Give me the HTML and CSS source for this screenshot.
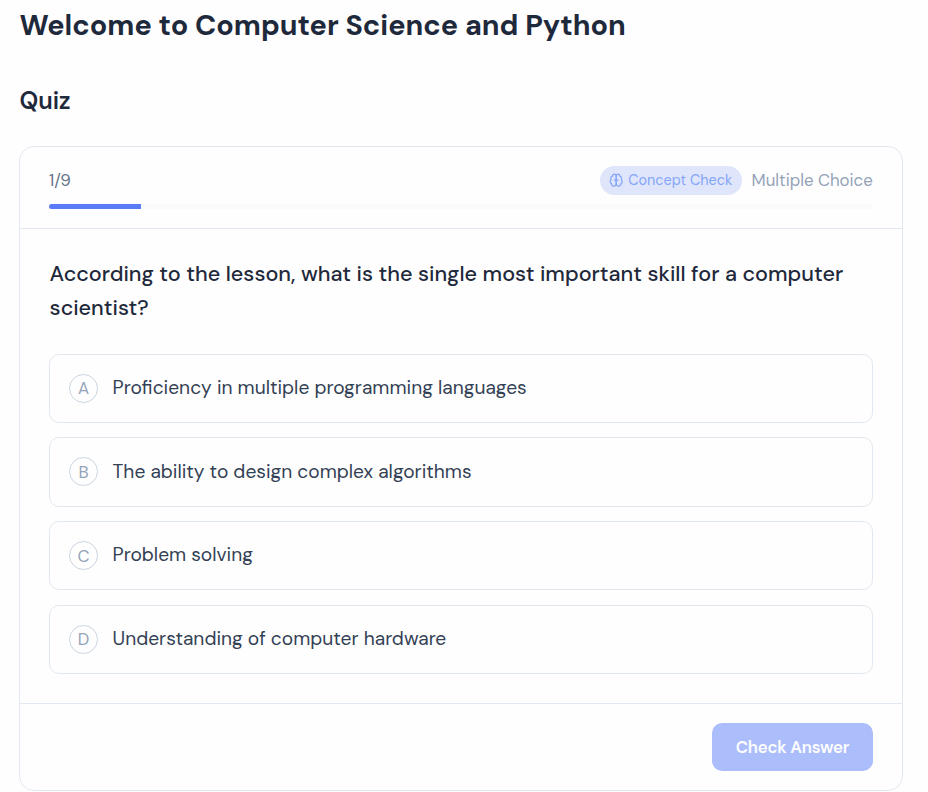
FILE: index.html
```html
<!DOCTYPE html>
<html lang="en">
<head>
    <meta charset="UTF-8">
    <meta name="viewport" content="width=device-width, initial-scale=1.0">
    <title>Welcome to Computer Science and Python</title>
    <link rel="stylesheet" href="styles.css">
</head>
<body>
    <div class="container">
        <h1>Welcome to Computer Science and Python</h1>
        <h2>Quiz</h2>

        <form class="quiz" id="quizForm">
            <div class="quiz-header">
                <div class="quiz-info">
                    <span class="counter">1/9</span>
                    <div class="tags">
                        <span class="badge">
                            <svg class="badge-icon" viewBox="0 0 24 24" fill="none" stroke="currentColor" stroke-width="2" stroke-linecap="round" stroke-linejoin="round">
                                <path d="M12 5a3 3 0 1 0-5.997.125 4 4 0 0 0-2.526 5.77 4 4 0 0 0 .556 6.588A4 4 0 1 0 12 18Z"/>
                                <path d="M12 5a3 3 0 1 1 5.997.125 4 4 0 0 1 2.526 5.77 4 4 0 0 1-.556 6.588A4 4 0 1 1 12 18Z"/>
                                <path d="M9 12h6"/>
                            </svg>
                            <span class="badge-text">Concept Check</span>
                        </span>
                        <span class="type">Multiple Choice</span>
                    </div>
                </div>
                <div class="progress">
                    <div class="progress-bar" style="width: 11.11%"></div>
                </div>
            </div>

            <div class="quiz-body">
                <p class="question">According to the lesson, what is the single most important skill for a computer scientist?</p>
                <div class="options">
                    <button type="button" class="option">
                        <span class="letter">A</span>
                        <span class="option-text">Proficiency in multiple programming languages</span>
                    </button>
                    <button type="button" class="option">
                        <span class="letter">B</span>
                        <span class="option-text">The ability to design complex algorithms</span>
                    </button>
                    <button type="button" class="option">
                        <span class="letter">C</span>
                        <span class="option-text">Problem solving</span>
                    </button>
                    <button type="button" class="option">
                        <span class="letter">D</span>
                        <span class="option-text">Understanding of computer hardware</span>
                    </button>
                </div>
            </div>

            <div class="quiz-footer">
                <button type="submit" class="check-btn" disabled>Check Answer</button>
            </div>
        </form>
    </div>
</body>
</html>
```

FILE: styles.css
```css
* {
    box-sizing: border-box;
}
body {
    font-family: "DM Sans", Inter, sans-serif;
    margin: 0;
    background-color: #fefefe;
    color: #1e293b;
}
.container {
    width: 884px;
    margin-left: 19px;
}
h1 {
    margin: 0;
    padding: 5px 0 0 0.5px;
    font-size: 28.8px;
    line-height: 40px;
    font-weight: 700;
    white-space: nowrap;
}
h2 {
    margin: 40px 0 0;
    padding-left: 0.5px;
    font-size: 24px;
    line-height: 32px;
    font-weight: 600;
}
.quiz {
    margin-top: 29px;
    height: 645px;
    border: 1px solid #e2e8f0;
    border-radius: 15px;
    display: flex;
    flex-direction: column;
}
.quiz-header {
    height: 82px;
    padding: 19px 29px 0;
    border-bottom: 1px solid #e2e8f0;
}
.quiz-info {
    display: flex;
    align-items: center;
    justify-content: space-between;
    height: 29px;
}
.counter {
    padding-bottom: 2px;
    font-size: 16.8px;
    color: #64748b;
}
.tags {
    display: flex;
    align-items: center;
    gap: 9.6px;
}
.badge {
    display: flex;
    align-items: center;
    gap: 4.8px;
    width: 142px;
    height: 29px;
    padding-left: 9px;
    border-radius: 15px;
    background-color: #dfe5fb;
    color: #84a5f8;
    font-size: 14.4px;
    white-space: nowrap;
}
.badge-icon {
    width: 14.4px;
    height: 14.4px;
    flex-shrink: 0;
}
.badge-text {
    padding-bottom: 1px;
}
.type {
    padding: 0 0.3px 2px 0;
    font-size: 16.8px;
    color: #94a3b8;
    white-space: nowrap;
}
.progress {
    height: 5px;
    margin-top: 9px;
    border-radius: 3px;
    background-color: #f8fafc;
    overflow: hidden;
}
.progress-bar {
    height: 100%;
    background-color: #597bf7;
}
.quiz-body {
    flex: 1;
    padding: 28px 29px 0;
}
.question {
    margin: 0;
    padding-left: 0.6px;
    font-size: 21.6px;
    line-height: 34px;
    font-weight: 500;
}
.options {
    display: flex;
    flex-direction: column;
    gap: 14.55px;
    margin-top: 28.8px;
}
.option {
    display: flex;
    align-items: center;
    gap: 14.6px;
    height: 69.1px;
    padding: 0 19px;
    border: 1px solid #e2e8f0;
    border-radius: 10px;
    background: none;
    color: #334155;
    font-family: inherit;
    font-size: 19.2px;
    text-align: left;
    cursor: pointer;
}
.letter {
    display: flex;
    align-items: center;
    justify-content: center;
    width: 29px;
    height: 29px;
    border: 1px solid #cbd5e1;
    border-radius: 50%;
    color: #94a3b8;
    font-size: 16.8px;
}
.option-text {
    padding-bottom: 1.36px;
    white-space: nowrap;
}
.quiz-footer {
    display: flex;
    justify-content: flex-end;
    height: 87px;
    padding: 19px 29px;
    border-top: 1px solid #e2e8f0;
}
.check-btn {
    width: 161px;
    height: 48px;
    padding: 0;
    border: none;
    border-radius: 10px;
    background-color: #acbdfb;
    color: #fdfdff;
    font-family: inherit;
    font-size: 16.8px;
    font-weight: 600;
    letter-spacing: -0.2px;
}
```
